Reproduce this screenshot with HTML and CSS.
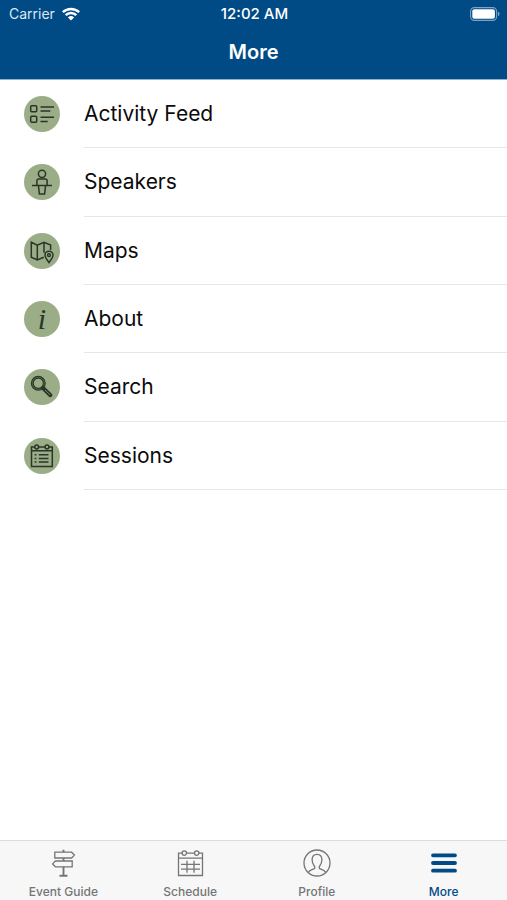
FILE: index.html
```html
<!DOCTYPE html>
<html lang="en">
<head>
  <meta charset="UTF-8">
  <meta name="viewport" content="width=device-width, initial-scale=1">
  <title>More</title>
  <link rel="stylesheet" href="styles.css">
</head>
<body>

  <header class="header">
    <div class="status">
      <div class="carrier">
        <span>Carrier</span>
        <svg class="wifi" viewBox="0 0 18 14" aria-hidden="true">
          <path d="M.8 5.200a11.800 11.800 0 0 1 16.400 0M3.700 8.200a7.600 7.600 0 0 1 10.600 0" fill="none" stroke="#fff" stroke-width="2.500"/>
          <path d="M9 13.600 5.900 10.400a4.600 4.600 0 0 1 6.200 0z" fill="#fff"/>
        </svg>
      </div>
      <time class="clock">12:02 AM</time>
      <svg class="battery" viewBox="0 0 30 14" aria-hidden="true">
        <rect x=".6" y=".6" width="26" height="12.8" rx="3.8" fill="none" stroke="#7fa3c3" stroke-width="1.1"/>
        <rect x="2.3" y="2.3" width="22.6" height="9.4" rx="2" fill="#fff"/>
        <path d="M28 4.8c2 .6 2 3.8 0 4.4z" fill="#7fa3c3"/>
      </svg>
    </div>
    <h1 class="title">More</h1>
  </header>

  <main class="content">
    <ul class="menu">
      <li>
        <a class="row" href="#feed">
          <svg class="icon" viewBox="0 0 36 36" aria-hidden="true">
            <rect x="6.7" y="9.7" width="6" height="6" rx="1"/>
            <rect x="6.7" y="20.3" width="6" height="6" rx="1"/>
            <path d="M16.5 11H30M16.5 15h9.8M16.5 21.2H30M16.5 25.400h7.200"/>
          </svg>
          <span class="label">Activity Feed</span>
        </a>
      </li>
      <li>
        <a class="row" href="#speakers">
          <svg class="icon" viewBox="0 0 36 36" aria-hidden="true">
            <circle cx="18" cy="9.800" r="3.600"/>
            <path d="M12.900 21v-4.200q0-1.800 2-1.800h6.200q2 0 2 1.800V21M8 21.400h20M14.400 21.400l1 8.600h5.200l1-8.600"/>
          </svg>
          <span class="label">Speakers</span>
        </a>
      </li>
      <li>
        <a class="row" href="#maps">
          <svg class="icon" viewBox="0 0 36 36" aria-hidden="true">
            <path d="M19.800 24.200 13.300 27l-6-2.800V9.300l6 2.800L20 9.300l6.600 2.800v5M13.300 12.100V27M20 9.300v10.500"/>
            <path d="M25 29.600c-2.400-3.300-4-5.300-4-7.400a4 4 0 0 1 8 0c0 2.100-1.600 4.100-4 7.400z"/>
            <circle cx="25" cy="22.200" r="1.400"/>
          </svg>
          <span class="label">Maps</span>
        </a>
      </li>
      <li>
        <a class="row" href="#about">
          <span class="icon info" aria-hidden="true">i</span>
          <span class="label">About</span>
        </a>
      </li>
      <li>
        <a class="row" href="#search">
          <svg class="icon" viewBox="0 0 36 36" aria-hidden="true">
            <circle cx="14.300" cy="14.300" r="6" stroke-width="3"/>
            <circle cx="14.300" cy="14.300" r="6" stroke="#68785a" stroke-width=".7"/>
            <path d="m19 19 7.400 7.200" stroke-width="4" stroke-linecap="round"/>
            <path d="m21 21 5.200 5" stroke="#7c8e6c" stroke-width="1"/>
          </svg>
          <span class="label">Search</span>
        </a>
      </li>
      <li>
        <a class="row" href="#sessions">
          <svg class="icon" viewBox="0 0 36 36" aria-hidden="true">
            <path d="M10.700 9H7.500v19.500h20.800V9h-3.200M14.700 9h6.400M7.500 12.800h20.800"/>
            <circle cx="12.700" cy="9" r="1.900"/>
            <circle cx="23" cy="9" r="1.900"/>
            <path d="M10.600 16.800h1.800M10.600 20.400h1.800M10.600 24h1.800M14.800 16.800h9.700M14.800 20.400h9.700M14.800 24h9.700"/>
          </svg>
          <span class="label">Sessions</span>
        </a>
      </li>
    </ul>
  </main>

  <nav class="tabs">
    <a class="tab" href="#guide">
      <svg class="tab-icon" viewBox="0 0 28 28" aria-hidden="true">
        <path d="M5.800 3.200h16.800l2.800 2.900-2.800 2.900H5.800zM23.200 12H6.400l-2.800 2.900 2.800 2.900h16.800z"/>
        <path d="M14.500.8v2.400M14.500 9v3M14.500 17.800v8.700M10.500 26.700h8" stroke-width="1.900"/>
      </svg>
      <span>Event Guide</span>
    </a>
    <a class="tab" href="#schedule">
      <svg class="tab-icon" viewBox="0 0 28 28" aria-hidden="true">
        <path d="M6.100 4.200H2.500v22.300h24V4.200h-3.600M10.500 4.200h8M2.500 9.200h24"/>
        <circle cx="8.300" cy="4.100" r="2.200"/>
        <circle cx="20.700" cy="4.100" r="2.200"/>
        <path d="M5 15.400h19M5 20.200h19M11 11.800v12M18 11.800v12"/>
      </svg>
      <span>Schedule</span>
    </a>
    <a class="tab" href="#profile">
      <svg class="tab-icon" viewBox="0 0 28 28" aria-hidden="true">
        <circle cx="14" cy="14" r="13"/>
        <path d="M5.200 23.400c.9-2 3.500-2.700 5.600-3.500 1.300-.5 1.200-2 .5-2.900-1.300-1.700-2.200-3.800-2.200-6.300 0-3.300 2-5.400 4.900-5.400s4.900 2.100 4.900 5.400c0 2.500-.9 4.600-2.200 6.300-.7.900-.8 2.400.5 2.900 2.100.8 4.700 1.500 5.600 3.500"/>
      </svg>
      <span>Profile</span>
    </a>
    <a class="tab active" href="#more" aria-current="page">
      <svg class="tab-icon" viewBox="0 0 28 28" aria-hidden="true">
        <path d="M3 6.300h22M3 14h22M3 21.700h22" stroke-width="3.800" stroke-linecap="round"/>
      </svg>
      <span>More</span>
    </a>
  </nav>

</body>
</html>
```

FILE: styles.css
```css
* { box-sizing: border-box; }
body { margin: 0; min-height: 100vh; display: flex; flex-direction: column; background: #fff; color: #0b0b0b; font-family: Inter, "Liberation Sans", sans-serif; }
a { color: inherit; text-decoration: none; }

/* header */
.header { background: #004a86; color: #fff; border-bottom: 1px solid #8fb0cc; }
.status { display: grid; grid-template-columns: 1fr auto 1fr; align-items: center; height: 27px; padding: 0 7px 0 9px; font-size: 14px; }
.carrier { display: flex; align-items: center; gap: 7px; color: #dce8f2; }
.wifi { width: 18px; height: 14px; }
.clock { font-size: 15px; font-weight: 500; }
.battery { width: 30px; height: 14px; justify-self: end; }
.title { margin: 0; height: 52px; line-height: 51px; font-size: 20px; font-weight: 600; text-align: center; }

/* list */
.content { flex: 1; }
.menu { display: grid; grid-auto-rows: 1fr; min-height: 410px; margin: 0; padding: 0; list-style: none; }
.row { display: flex; align-items: stretch; gap: 24px; height: 100%; padding-left: 24px; }
.icon { flex: none; align-self: center; width: 36px; height: 36px; border-radius: 50%; background: #9bad87; fill: none; stroke: #29352a; stroke-width: 1.5; }
.info { color: #29352a; font: italic 30px/36px "Liberation Serif", serif; text-align: center; }
.label { flex: 1; display: flex; align-items: center; border-bottom: 1px solid #e6e6e6; font-size: 21px; }

/* tab bar */
.tabs { display: grid; grid-template-columns: repeat(4, 1fr); padding-top: 8px; background: #f7f7f7; border-top: 1px solid #dcdcdc; color: #757575; }
.tab { display: flex; flex-direction: column; align-items: center; gap: 6px; font-size: 12px; font-weight: 500; line-height: 17px; }
.tab-icon { width: 28px; height: 28px; fill: none; stroke: currentColor; stroke-width: 1.3; }
.active { color: #004a86; }
```
